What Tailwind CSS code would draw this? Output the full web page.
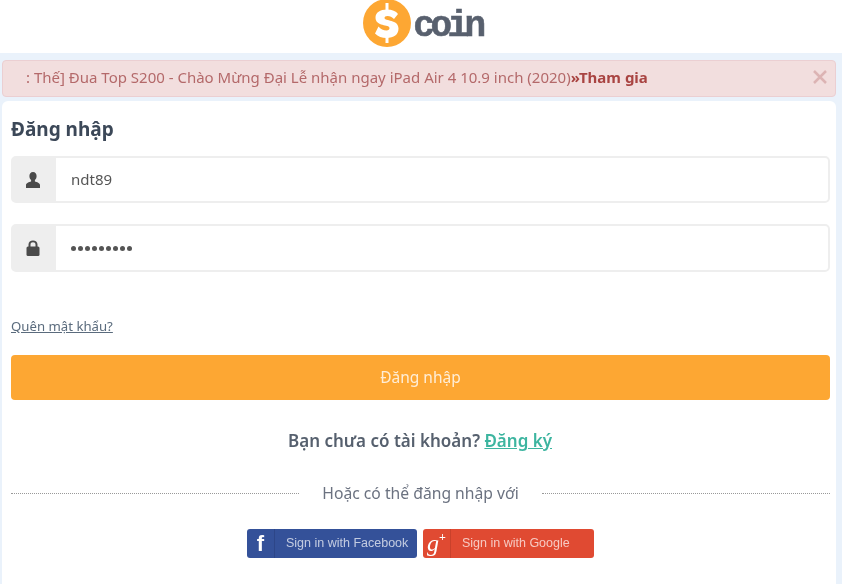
<!DOCTYPE html>
<html lang="en">
<head>
  <meta charset="UTF-8">
  <meta name="viewport" content="width=device-width, initial-scale=1.0">
  <title>Scoin - Đăng nhập</title>
  <script src="https://cdn.jsdelivr.net/npm/@tailwindcss/browser@4"></script>
</head>
<body class="bg-white font-['Noto_Sans',sans-serif] text-[#4a5568] h-[584px] overflow-hidden">
  <div class="blur-[0.4px]">
  <!-- logo -->
  <header class="h-[53px] flex items-start justify-center">
    <div class="flex items-center mt-[-1px] ml-[3px]">
      <svg width="48" height="48" viewBox="0 0 48 48">
        <circle cx="24" cy="24" r="24" fill="#fda733"/>
        <rect x="22.500" y="4" width="3" height="8" fill="#fff"/>
        <rect x="22.500" y="36" width="3" height="8" fill="#fff"/>
        <path d="M35 15c-2-3-6-4.500-11-4.500-7 0-11.500 3-11.500 8 0 9.500 14 6.500 14 10.500 0 1.500-1 2.500-3 2.500-3 0-6-1.500-8-4l-3.500 7c3 3 7 4.500 11.500 4.500 7.500 0 12-3.500 12-9.500 0-9.500-14-7-14-10.500 0-1.200 1-2 3-2 2.500 0 4.500 1 6.500 3z" fill="#fff"/>
      </svg>
      <span class="font-['Liberation_Mono',monospace] font-bold text-[36px] leading-none tracking-[-4.500px] text-[#58606e] [-webkit-text-stroke:0.6px_#58606e] ml-[2px] mt-[7px]">coin</span>
    </div>
  </header>

  <main class="bg-[#eaf2fb] h-[531px] pt-[7px] pl-[2px] pr-[6px]">
    <!-- alert -->
    <div class="h-[37px] bg-[#f2dede] border border-[#ebcfd2] rounded-[4px] flex items-center justify-between pl-[23px] pr-[7px] text-[#b4696a] text-[15px] whitespace-nowrap">
      <p class="mt-[-2px]">: Thế] Đua Top S200 - Chào Mừng Đại Lễ nhận ngay iPad Air 4 10.9 inch (2020)<b class="text-[#a94442]">»Tham gia</b></p>
      <svg width="16" height="16" viewBox="0 0 16 16" class="text-[#dcb4b4] mt-[-4px]"><path d="M2 2l12 12M14 2L2 14" stroke="currentColor" stroke-width="2.500" fill="none"/></svg>
    </div>

    <!-- login card -->
    <section class="bg-white rounded-t-[6px] mt-[4px] h-[484px] px-[9px] pt-[15px]">
      <h1 class="text-[19px] leading-[26px] font-bold text-[#3c4858]">Đăng nhập</h1>

      <div class="mt-[14px] h-[47px] flex border-2 border-[#eeeeee] rounded-[5px] mr-[-3px]">
        <span class="w-[43px] bg-[#eeeeee] flex items-center justify-center pr-[4px]">
          <svg width="16" height="16" viewBox="0 0 16 16" fill="#4a4a4a"><path d="M8 0c2.300 0 3.600 1.800 3.600 4 0 1.700-.7 3.300-1.700 4.100v1.300c2 .6 5.100 1.500 5.100 3.600v3H1v-3c0-2.100 3.100-3 5.100-3.600V8.100C5.100 7.300 4.400 5.700 4.400 4 4.400 1.800 5.700 0 8 0z"/></svg>
        </span>
        <span class="pl-[15px] flex items-center text-[15px] text-[#555555] mt-[-1px]">ndt89</span>
      </div>

      <div class="mt-[21px] h-[48px] flex border-2 border-[#eeeeee] rounded-[5px] mr-[-3px]">
        <span class="w-[43px] bg-[#eeeeee] flex items-center justify-center pr-[4px]">
          <svg width="16" height="16" viewBox="0 0 16 16" fill="#4a4a4a"><path d="M3.500 7V4.500C3.500 2 5.500.5 8 .5s4.500 1.500 4.500 4V7h-2V4.500C10.500 3 9.500 2.300 8 2.300S5.500 3 5.500 4.500V7z"/><rect x="1.500" y="6.500" width="13" height="9.500" rx="1.500"/></svg>
        </span>
        <span class="pl-[15px] flex items-center gap-[2px]">
          <i class="w-[5px] h-[5px] rounded-full bg-[#555555]"></i><i class="w-[5px] h-[5px] rounded-full bg-[#555555]"></i><i class="w-[5px] h-[5px] rounded-full bg-[#555555]"></i><i class="w-[5px] h-[5px] rounded-full bg-[#555555]"></i><i class="w-[5px] h-[5px] rounded-full bg-[#555555]"></i><i class="w-[5px] h-[5px] rounded-full bg-[#555555]"></i><i class="w-[5px] h-[5px] rounded-full bg-[#555555]"></i><i class="w-[5px] h-[5px] rounded-full bg-[#555555]"></i><i class="w-[5px] h-[5px] rounded-full bg-[#555555]"></i>
        </span>
      </div>

      <a href="#" class="block mt-[44px] text-[13.200px] leading-[20px] underline text-[#5a6b7d]">Quên mật khẩu?</a>

      <button class="mt-[19px] w-[819px] h-[45px] bg-[#fda733] rounded-[4px] text-white/80 text-[15.500px]">Đăng nhập</button>

      <p class="mt-[29px] text-center text-[17px] leading-[24px] font-semibold text-[#56606e] pl-[2px]">Bạn chưa có tài khoản? <a href="#" class="underline text-[#3db5a0]">Đăng ký</a></p>

      <div class="mt-[29px] w-[819px] flex items-center gap-[23px] text-[15.700px] text-[#6b7280]">
        <span class="flex-1 border-t border-dotted border-[#999999]"></span>
        <span>Hoặc có thể đăng nhập với</span>
        <span class="flex-1 border-t border-dotted border-[#999999]"></span>
      </div>

      <div class="mt-[23px] w-[819px] flex justify-center gap-[6px] text-[12.500px] text-white/70 font-['Liberation_Sans',sans-serif]">
        <a href="#" class="w-[170px] h-[29px] bg-[#345199] rounded-[3px] flex items-center">
          <span class="w-[28px] h-full flex items-center justify-center border-r border-[#2d4688] text-white font-bold text-[22px]">f</span>
          <span class="ml-[11px]">Sign in with Facebook</span>
        </a>
        <a href="#" class="w-[171px] h-[29px] bg-[#e04a32] rounded-[3px] flex items-center">
          <span class="w-[28px] h-full flex items-center justify-center border-r border-[#c9412b] text-white font-['Liberation_Serif',serif] italic text-[24px] leading-none">g<sup class="text-[12px] font-bold not-italic">+</sup></span>
          <span class="ml-[11px]">Sign in with Google</span>
        </a>
      </div>
    </section>
  </main>
  </div>
</body>
</html>
